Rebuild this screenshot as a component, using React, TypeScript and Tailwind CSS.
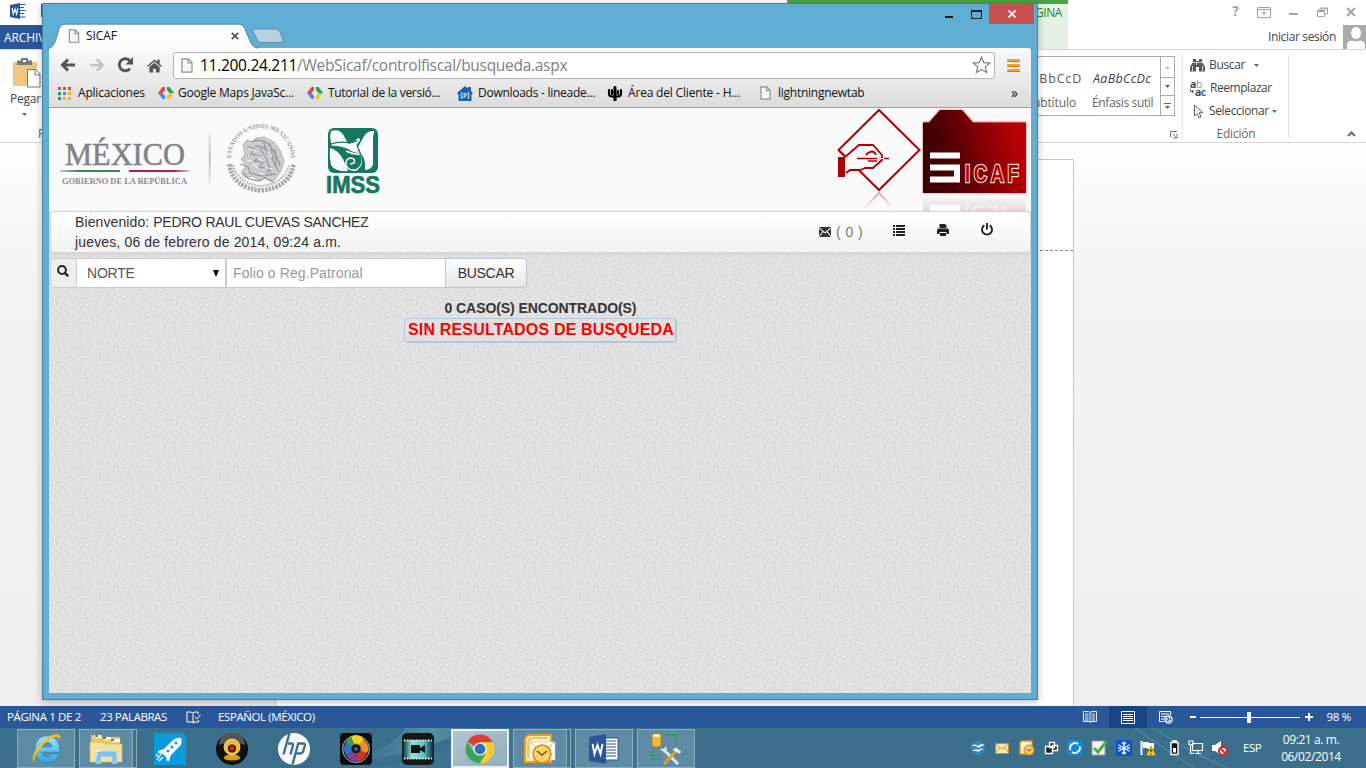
import React from "react";

const ui = "font-['Open_Sans','Noto_Sans',sans-serif]";

/* ---------- small shared drawings ---------- */

function Sheet({ w = 12, h = 15 }: { w?: number; h?: number }) {
  return (
    <svg width={w} height={h} viewBox="0 0 12 15" className="shrink-0">
      <path d="M1 .8h6.3L11 4.6v9.6H1z" fill="#f6f6f6" stroke="#8c8c8c" strokeWidth="1.2" />
      <path d="M7 1v4h4" fill="none" stroke="#8c8c8c" strokeWidth="1.1" />
    </svg>
  );
}

function Down({ color = "#666" }: { color?: string }) {
  return (
    <svg width="5" height="3" viewBox="0 0 5 3" className="shrink-0">
      <path d="M0 0h5L2.5 3z" fill={color} />
    </svg>
  );
}

function CodeMark() {
  return (
    <svg width="16" height="14" viewBox="0 0 16 14" className="shrink-0">
      <path d="M4.500 1H7v3L4.600 7H0z" fill="#dd4b39" />
      <path d="M0 7h4.600L7 10v3H4.500z" fill="#4a86f7" />
      <path d="M9 1h2.500L16 7h-4.600L9 4z" fill="#1aa260" />
      <path d="M11.400 7H16l-4.500 6H9v-3z" fill="#fbc02d" />
    </svg>
  );
}

/* ---------- Word ---------- */

function WordTop() {
  return (
    <div className="flex h-[50px] shrink-0 justify-between border-b border-[#d5d5d5] bg-white">
      <div className="flex w-[43px] flex-col">
        <div className="flex h-[25px] justify-between pt-[3px] pl-[10px]">
          <svg width="16" height="16" viewBox="0 0 16 16">
            <path d="M10 1.500h5.500M10 4.500h4M10 7.500h5.500M10 10.500h4M10 14h5.500" stroke="#2b579a" strokeWidth="1" />
            <path d="M0 2l10-2v16L0 14z" fill="#2b579a" />
            <path d="M2 5l1.300 6L5 6l1.600 5L8 5" fill="none" stroke="#fff" strokeWidth="1.2" />
          </svg>
          <div className="mt-px h-[13px] w-[2px] bg-[#80397b]" />
        </div>
        <div className="h-[25px] overflow-hidden bg-[#2a579a] pl-[4px] text-[12px] leading-[25px] tracking-[-0.1px] text-white">ARCHIVO</div>
      </div>
      <div className="flex">
        <div className="flex h-[49px] w-[281px] justify-end border-t-4 border-[#4ba446] bg-[#e6f1e6] pr-[6px]">
          <span className="pt-[1px] text-[12px] leading-[16px] tracking-[-0.4px] text-[#1b8a1b]">GINA</span>
        </div>
        <div className="flex w-[298px] flex-col">
          <div className="flex h-[24px] items-center justify-end gap-[18px] pr-[9px]">
            <span className="-mt-[2px] text-[14px] leading-[20px] font-bold text-[#a0a0a0]">?</span>
            <svg width="14" height="11" viewBox="0 0 14 11">
              <path d="M.5.5h13v10H.5zM.5 2.500h13M7 9V4.500M4.800 6.600L7 4.500l2.200 2.100" fill="none" stroke="#a5a5a5" />
            </svg>
            <svg width="10" height="11" viewBox="0 0 10 11"><path d="M0 6h9v2H0z" fill="#a5a5a5" /></svg>
            <svg width="11" height="11" viewBox="0 0 11 11">
              <path d="M.5 3.500h7v6h-7zM.5 4.500h7M3 3V1h7.500v6H8M3 2h7" fill="none" stroke="#a5a5a5" />
            </svg>
            <svg width="11" height="11" viewBox="0 0 11 11"><path d="M1 1l8 8M9 1l-8 8" stroke="#a5a5a5" strokeWidth="2" /></svg>
          </div>
          <div className="flex h-[25px] items-center justify-end gap-[6px]">
            <span className="text-[12px] tracking-[-0.35px] text-[#444]">Iniciar sesión</span>
            <svg width="24" height="25" viewBox="0 0 24 25">
              <path d="M1 1h23v24H1z" fill="#ababab" />
              <ellipse cx="14" cy="9" rx="5" ry="6" fill="#fff" />
              <path d="M5 25v-4q0-4 5-4.500q4 2 8 0q5 .5 5 4.500v4z" fill="#fff" />
            </svg>
          </div>
        </div>
      </div>
    </div>
  );
}

function WordRibbon() {
  return (
    <div className="flex h-[93px] shrink-0 justify-between border-b border-[#d5d5d5] bg-white text-[12px] text-[#444]">
      <div className="flex w-[46px] flex-col overflow-hidden pl-[10px]">
        <svg width="32" height="31" viewBox="0 0 32 31" className="mt-[8px] ml-[2px] shrink-0">
          <path d="M1 4h24v24H1z" fill="#eec67c" />
          <path d="M5 2.500h4V0h7v2.500h4V7H5z" fill="#777" />
          <path d="M11 2h3v2h-3z" fill="#fff" />
          <path d="M15.500 11.500h8l4.500 4.500v13H15.500z" fill="#fff" stroke="#777" />
          <path d="M23 12v5h5" fill="none" stroke="#777" />
        </svg>
        <span className="mt-px leading-[18px] tracking-[-0.25px]">Pegar</span>
        <span className="mt-[5px] ml-[12px] flex"><Down /></span>
        <span className="mt-[9px] ml-[28px] leading-[18px] text-[#666]">P</span>
      </div>
      <div className="flex">
        <div className="flex w-[146px] flex-col">
          <div className="mt-[6px] flex h-[60px] w-[139px] border border-[#ababab]">
            <div className="flex flex-1 justify-between pr-[6px]">
              <div className="flex w-[46px] flex-col items-end">
                <span className="mt-[13px] mr-[1px] h-[20px] text-[12.500px] leading-[18px] tracking-[0.8px] text-[#5a5a5a]">BbCcD</span>
                <span className="mt-[4px] mr-[7px] leading-[18px] tracking-[-0.1px] text-[#666]">ubtítulo</span>
              </div>
              <div className="flex w-[62px] flex-col whitespace-nowrap">
                <span className="mt-[13px] ml-[1px] h-[20px] w-[60px] overflow-hidden text-[12.500px] leading-[18px] tracking-[0.3px] text-[#404040] italic">AaBbCcDc</span>
                <span className="mt-[4px] leading-[18px] tracking-[-0.35px] text-[#666]">Énfasis sutil</span>
              </div>
            </div>
            <div className="flex w-[14px] flex-col border-l border-[#ababab]">
              <div className="flex h-[20px] items-center justify-center"><span className="flex rotate-180"><Down color="#bbb" /></span></div>
              <div className="flex h-[19px] items-center justify-center border-y border-[#ababab]"><Down /></div>
              <div className="flex flex-1 flex-col items-center justify-center gap-[2px]"><div className="h-px w-[7px] bg-[#666]" /><Down /></div>
            </div>
          </div>
          <svg width="8" height="8" viewBox="0 0 8 8" className="mt-[15px] ml-[134px]">
            <path d="M.5 6V.5H7M3 3l3.500 3.500M7 3v4H3" fill="none" stroke="#777" />
          </svg>
        </div>
        <div className="mt-[4px] mb-[4px] flex w-[107px] flex-col border-x border-[#e1e1e1] pl-[7px]">
          <div className="flex h-[22px] shrink-0 items-center gap-[4px]">
            <svg width="15" height="14" viewBox="0 0 15 14">
              <path d="M3 1h3v2h3V1h3v3l3 5v4.500H9V9H6v4.500H0V9l3-5z" fill="#5a5a5a" />
              <path d="M3 4.500h9M2.500 8v5M12.500 8v5M6.500 4v3" stroke="#fff" strokeWidth=".7" />
            </svg>
            <span className="tracking-[-0.35px]">Buscar</span>
            <span className="ml-[5px] flex"><Down /></span>
          </div>
          <div className="flex h-[24px] shrink-0 items-center gap-[3px]">
            <div className="flex h-[17px] w-[16px] flex-col text-[10.500px] font-bold text-[#444]">
              <span className="h-[8px] leading-[8px] tracking-[-0.3px]">a<span className="font-normal text-[#999]">b</span></span>
              <span className="flex h-[8px] items-center leading-[8px] tracking-[-0.5px]">
                <svg width="4" height="5" viewBox="0 0 4 5" className="mr-px"><path d="M.5 0v2.500h3M2 1l1.500 1.500L2 4" fill="none" stroke="#2b6cb5" /></svg>
                a<span className="text-[#2b6cb5]">c</span>
              </span>
            </div>
            <span className="ml-px tracking-[-0.45px]">Reemplazar</span>
          </div>
          <div className="flex h-[22px] shrink-0 items-center gap-[4px]">
            <svg width="15" height="15" viewBox="0 0 15 15">
              <path d="M4.500 1v11l2.700-2.500 2 4.500 2-1-2-4.300H13z" fill="#fff" stroke="#666" />
            </svg>
            <span className="tracking-[-0.35px]">Seleccionar</span>
            <span className="-ml-[1px] flex"><Down /></span>
          </div>
          <div className="mt-[3px] flex w-[92px] justify-center leading-[17px] tracking-[-0.2px] text-[#666]">Edición</div>
        </div>
        <div className="flex w-[77px] items-end justify-end pr-[10px] pb-[5px]">
          <svg width="9" height="6" viewBox="0 0 9 6"><path d="M1 5l3.500-3.500L8 5" fill="none" stroke="#666" strokeWidth="2" /></svg>
        </div>
      </div>
    </div>
  );
}

function WordDocument() {
  return (
    <div className="flex min-h-0 flex-1 bg-linear-to-b from-[#fefefe] via-[#f3f3f3] via-25% to-[#eeeeee] pt-[16px] pl-[275px]">
      <div className="w-[799px] border-x border-t border-[#c6c6c6] bg-white">
        <div className="mt-[90px] border-t border-dashed border-[#888]" />
      </div>
    </div>
  );
}

function WordStatus() {
  return (
    <div className="flex h-[22px] shrink-0 items-center bg-[#2a579a] text-[11.500px] text-white">
      <span className="ml-[7px] w-[93px] tracking-[-0.35px]">PÁGINA 1 DE 2</span>
      <span className="w-[86px] tracking-[-0.45px]">23 PALABRAS</span>
      <svg width="15" height="13" viewBox="0 0 15 13">
        <path d="M7 2.500v8.500l1.500 1M7 2Q5 .5 1 1v10h4.500L7 12M7 2q2-1.500 5-1v2M9 6l2 2 3.500-4.500M12.500 9v2H8" fill="none" stroke="#fff" />
      </svg>
      <span className="ml-[17px] tracking-[-0.4px]">ESPAÑOL (MÉXICO)</span>
      <div className="ml-auto flex h-full items-center">
        <svg width="14" height="12" viewBox="0 0 14 12">
          <path d="M7 1.500L5.500.5h-5v10h5l1.500 1 1.500-1h5V.5h-5L7 1.500zM7 1.500v10M2 3h3.500M2 5h3.500M2 7h3.500M8.500 3H12M8.500 5H12M8.500 7H12M2 9h3.500M8.500 9H12" fill="none" stroke="#fff" strokeWidth=".9" />
        </svg>
        <div className="ml-[12px] flex h-full w-[38px] items-center justify-center bg-[#1a4484]">
          <svg width="14" height="13" viewBox="0 0 14 13">
            <path d="M.5.5h13v12H.5zM2 3.500h10M2 5.500h10M2 7.500h10M2 9.500h10" fill="none" stroke="#fff" />
          </svg>
        </div>
        <svg width="14" height="13" viewBox="0 0 14 13" className="ml-[12px]">
          <path d="M5 10.500H.5V.5h11V4M2 3h8M2 5.500h5M2 8h3" fill="none" stroke="#fff" />
          <circle cx="9.500" cy="8.500" r="4" fill="#a8c4e4" stroke="#fff" strokeWidth=".7" />
          <path d="M8 6l2 2-2 2M11 7l1.500 2" fill="none" stroke="#2a579a" />
        </svg>
        <div className="ml-[17px] h-[2px] w-[6px] bg-white" />
        <div className="ml-[4px] flex h-[11px] w-[100px] items-center">
          <div className="h-px w-[47px] bg-white" />
          <div className="h-[11px] w-[4px] bg-white" />
          <div className="h-px flex-1 bg-white" />
        </div>
        <svg width="8" height="8" viewBox="0 0 8 8" className="ml-[5px]"><path d="M0 4h8M4 0v8" stroke="#fff" strokeWidth="2" /></svg>
        <span className="mr-[15px] ml-[14px] tracking-[-0.3px]">98 %</span>
      </div>
    </div>
  );
}

/* ---------- Browser chrome ---------- */

function TitleBar() {
  return (
    <div className="relative -mx-[6px] flex h-[44px] shrink-0 justify-between">
      <svg width="244" height="26" viewBox="0 0 244 26" className="absolute top-[19px] left-0">
        <defs>
          <linearGradient id="tab" x1="0" y1="0" x2="0" y2="1">
            <stop offset="0" stopColor="#fff" /><stop offset="1" stopColor="#fafafa" />
          </linearGradient>
        </defs>
        <path d="M5 25.500C10 24 11 22 13 16L16 6Q17.500 1.500 22 1.500H196Q200 1.500 201.500 5L207 18Q210 25 215 25.500z" fill="url(#tab)" />
        <path d="M5 25.500C10 24 11 22 13 16L16 6Q17.500 1 22 1H196Q200 1 201.500 5L207 18Q210 25 215 25" fill="none" stroke="#4e87a5" />
        <path d="M211 6h22q3 0 4 3l3 8q1 2.500-2 2.500h-20q-3 0-4-3l-4-8q-1-2.500 1-2.500z" fill="#b5d0df" stroke="#588fac" />
      </svg>
      <div className="relative flex h-[22px] w-[202px] items-center self-end pr-[6px] pb-[2px] pl-[25px]">
        <Sheet w={12} h={14} />
        <span className="ml-[6px] text-[12px] tracking-[-0.1px] text-[#111]">SICAF</span>
        <svg width="8" height="8" viewBox="0 0 8 8" className="ml-auto"><path d="M.8.8l6.400 6.400M7.200.8L.8 7.200" stroke="#555" strokeWidth="1.800" /></svg>
      </div>
      <div className="flex">
        <svg width="8" height="14" viewBox="0 0 8 14" className="mt-[3px]"><path d="M0 9h8v2H0z" fill="#1b1b1b" /></svg>
        <svg width="11" height="9" viewBox="0 0 11 9" className="mt-[6px] ml-[18px]"><path d="M.5 1.500h10v7H.5z" fill="none" stroke="#1b1b1b" /><path d="M0 0h11v2H0z" fill="#1b1b1b" /></svg>
        <div className="mr-[3px] ml-[7px] flex h-[20px] w-[45px] items-center justify-center bg-[#c75050]">
          <svg width="8" height="8" viewBox="0 0 8 8"><path d="M.5.5l7 7M7.500.5l-7 7" stroke="#fff" strokeWidth="1.600" /></svg>
        </div>
      </div>
    </div>
  );
}

function Toolbar() {
  return (
    <div className="flex h-[34px] shrink-0 items-center pl-[11px]">
      <svg width="16" height="14" viewBox="0 0 16 14"><path d="M15 7H3M8 1.500L2.500 7 8 12.500" fill="none" stroke="#555" strokeWidth="3" /></svg>
      <svg width="16" height="14" viewBox="0 0 16 14" className="ml-[13px]"><path d="M1 7h12M8 1.500L13.500 7 8 12.500" fill="none" stroke="#c3c3c3" strokeWidth="2.500" /></svg>
      <svg width="17" height="16" viewBox="0 0 17 16" className="ml-[12px]">
        <path d="M13 11.500A6 6 0 1 1 13 4" fill="none" stroke="#555" strokeWidth="2.800" />
        <path d="M16 0v7.500H8.500z" fill="#555" />
      </svg>
      <svg width="15" height="15" viewBox="0 0 16 15" className="ml-[13px]">
        <path d="M0 8l8-7 3 2.600V1h2.500v4.800L16 8l-1 1.200-7-6-7 6z" fill="#555" />
        <path d="M2.500 9L8 4.500 13.500 9v6h-4v-4h-3v4h-4z" fill="#555" />
      </svg>
      <div className="ml-[11px] flex h-[27px] w-[822px] items-center rounded-[3px] border border-[#b4b4b4] bg-white pr-[3px] pl-[7px]">
        <Sheet w={12} h={15} />
        <span className="ml-[7px] text-[15.500px] leading-[24px] tracking-[-0.29px] whitespace-nowrap text-[#808080]">
          <span className="text-black">11.200.24.211</span>/WebSicaf/controlfiscal/busqueda.aspx
        </span>
        <svg width="19" height="18" viewBox="0 0 19 18" className="ml-auto">
          <path d="M9.500 1.200l2.300 5.400 6 .5-4.600 3.800 1.500 5.700-5.200-3-5.200 3 1.500-5.700L1.200 7.100l6-.5z" fill="#fff" stroke="#808080" strokeWidth="1.200" />
        </svg>
      </div>
      <div className="ml-[12px] flex flex-col gap-[2px]">
        <div className="h-[3px] w-[13px] rounded-[1px] border-b border-[#d9760f] bg-[#f9a12a]" />
        <div className="h-[3px] w-[13px] rounded-[1px] border-b border-[#d9760f] bg-[#f9a12a]" />
        <div className="h-[3px] w-[13px] rounded-[1px] border-b border-[#d9760f] bg-[#f9a12a]" />
      </div>
    </div>
  );
}

function Bookmarks() {
  const dots = ["#dd4b39", "#dd4b39", "#dd4b39", "#1aa260", "#4285f4", "#f4b400", "#1aa260", "#f4b400", "#f4b400"];
  return (
    <div className="flex h-[22px] shrink-0 items-center pl-[9px] text-[12px] whitespace-nowrap text-[#111]">
      <div className="flex w-[100px] items-center gap-[7px]">
        <svg width="13" height="13" viewBox="0 0 13 13">
          {dots.map((c, i) => <rect key={i} x={(i % 3) * 5} y={Math.floor(i / 3) * 5} width="3" height="3" fill={c} />)}
        </svg>
        <span className="tracking-[-0.2px]">Aplicaciones</span>
      </div>
      <div className="flex w-[149px] items-center gap-[4px]"><CodeMark /><span className="tracking-[-0.22px]">Google Maps JavaSc...</span></div>
      <div className="flex w-[150px] items-center gap-[5px]"><CodeMark /><span className="tracking-[-0.3px]">Tutorial de la versió...</span></div>
      <div className="flex w-[150px] items-center gap-[5px]">
        <svg width="16" height="15" viewBox="0 0 16 15">
          <path d="M0 7l8-7 3 2.500V1h3v4l2 2-1.500 1.500V15h-13V8.500z" fill="#1763b8" />
          <path d="M5 6Q3 9.500 5 13M11 6q2 3.500 0 7M7 12V7.500h1.200a1.300 1.300 0 0 1 0 2.700H7" fill="none" stroke="#fff" />
        </svg>
        <span className="tracking-[-0.27px]">Downloads - lineade...</span>
      </div>
      <div className="flex w-[153px] items-center gap-[5px]">
        <svg width="16" height="15" viewBox="0 0 16 15">
          <path d="M8 14V3M8 10.500H5Q2 10.500 2 7.500V4M8 10.500h3q3 0 3-3V4M5 8V4M11 8V5" fill="none" stroke="#000" strokeWidth="2.200" strokeLinecap="round" />
          <path d="M6.500 1q1.500-2 3 0v14h-3z" fill="#000" />
        </svg>
        <span className="tracking-[-0.18px]">Área del Cliente - H...</span>
      </div>
      <div className="flex items-center gap-[7px]"><Sheet w={11} h={14} /><span className="tracking-[-0.25px]">lightningnewtab</span></div>
      <span className="mr-[13px] ml-auto text-[14px] leading-[20px]">»</span>
    </div>
  );
}

/* ---------- Page content ---------- */

function MexicoLogo() {
  return (
    <svg width="250" height="90" viewBox="0 0 250 90" className="shrink-0">
      <defs>
        <linearGradient id="fade" x1="0" y1="0" x2="0" y2="1">
          <stop offset="0" stopColor="#bbb" stopOpacity="0" /><stop offset=".5" stopColor="#999" /><stop offset="1" stopColor="#bbb" stopOpacity="0" />
        </linearGradient>
        <linearGradient id="halo">
          <stop offset="0" stopColor="#aaa" stopOpacity="0" /><stop offset=".5" stopColor="#aaa" stopOpacity=".1" /><stop offset="1" stopColor="#aaa" stopOpacity=".7" />
        </linearGradient>
        <linearGradient id="grn"><stop offset="0" stopColor="#bcd" /><stop offset=".3" stopColor="#2f8a57" /><stop offset="1" stopColor="#2f8a57" /></linearGradient>
        <linearGradient id="red"><stop offset="0" stopColor="#b0204e" /><stop offset=".75" stopColor="#b0204e" /><stop offset="1" stopColor="#dbb" /></linearGradient>
        <path id="arc" d="M172.500 49A29.800 29.800 0 1 1 231.500 49" />
      </defs>
      <text x="6" y="51.500" fontFamily="Liberation Serif" fontSize="32" fill="#808285" stroke="#808285" strokeWidth=".5" textLength="120" lengthAdjust="spacingAndGlyphs">MÉXICO</text>
      <rect x="1" y="57" width="60" height="2" fill="url(#grn)" />
      <rect x="70" y="57" width="60" height="2" fill="url(#red)" />
      <text x="3" y="70.500" fontFamily="Liberation Serif" fontSize="8.500" fontWeight="700" fill="#8a8c8e" textLength="125" lengthAdjust="spacingAndGlyphs">GOBIERNO DE LA REPÚBLICA</text>
      <path d="M151 18Q144 45 151 72z" fill="url(#halo)" opacity=".7" />
      <rect x="150.500" y="16" width="1" height="58" fill="url(#fade)" />
      <g fill="none" stroke="#a4a5a7">
        <path d="M170.500 51Q173 74.500 202 77.500Q231 74.500 234.500 51" strokeWidth="4.500" strokeDasharray="2.400 1.100" />
        <path d="M174 52Q179 71 202 73Q225 71 230 52" strokeWidth="2" strokeDasharray="1.800 1" stroke="#b4b5b7" />
        <path d="M184 32l4-5 5 2 4-4 8-1 10 5 6 8 4 11-3 10-8 11-8-4-6 2-7-4-7 2-4-6 5-6-5-7 4-4z" fill="#cbcccd" stroke="#b4b5b7" strokeWidth="1" />
        <path d="M192 29q12-5 19 4t10 20M196 33q12 0 16 10t8 16M188 33l7 3-3 5 9 2-6 5 10 1-6 6 12-1-4 7M181 51l8 3 2 6 12 3 14-2M204 28l5 14M211 30l3 16M216 36l1 18M201 35l7 12 4 14M184 60l6 6 10 2 6-3 8 4" strokeWidth="1.300" stroke="#999a9d" />
        <path d="M190 36l7 2M198 43l6 6M194 51l6 5M208 38l5 6M206 54l7 2M188 47l5 1M200 60l6 2" stroke="#f6f6f6" strokeWidth="1.200" />
      </g>
      <text fontFamily="Liberation Serif" fontSize="6.200" fontWeight="700" fill="#96979a" textAnchor="middle">
        <textPath href="#arc" startOffset="50%">ESTADOS UNIDOS MEXICANOS</textPath>
      </text>
    </svg>
  );
}

function ImssLogo() {
  return (
    <svg width="54" height="68" viewBox="0 0 54 68" className="shrink-0">
      <rect x="2" y="1" width="50" height="45" rx="6" fill="#17775f" />
      <path d="M5 4Q14 1 18 9l4 8q-9 2-16 1-3-7-1-14z" fill="#fafafa" />
      <path d="M48 4q-7-1-11 7l-5 9 4 8q4 5 3 15 8-1 8-7V10q1-4 1-6z" fill="#fafafa" />
      <path d="M4 21q8 2 13 11l5 12q-13 1-17-6-2-9-1-17z" fill="#fafafa" />
      <path d="M5 17q8-3 19-1l9-6 2 3-4 5q2 5 3 9-8-1-13-5-8-3-16-3z" fill="#fafafa" stroke="#17775f" strokeWidth="1.200" />
      <path d="M20 24q9 4 14 3 6 10-4 16-9 1-10-6 0-6 5-6 5 1 3 5l-4 1" fill="#17775f" stroke="#fafafa" strokeWidth="1.500" />
      <path d="M34 27q6 9-1 16M22 16l9-2" fill="none" stroke="#17775f" strokeWidth="1.400" />
      <text x="0" y="66" fontFamily="Liberation Sans" fontSize="24.500" fontWeight="700" fill="#17775f" stroke="#17775f" strokeWidth=".7" textLength="54" lengthAdjust="spacingAndGlyphs">IMSS</text>
    </svg>
  );
}

function SicafMark() {
  return (
    <svg width="196" height="103" viewBox="0 0 196 103" className="shrink-0">
      <defs>
        <linearGradient id="folder" x1="0" y1=".2" x2="1" y2="0">
          <stop offset="0" stopColor="#3d0003" /><stop offset=".25" stopColor="#580005" /><stop offset=".8" stopColor="#b10005" /><stop offset="1" stopColor="#c30005" />
        </linearGradient>
        <linearGradient id="mirror" x1="0" y1="0" x2="0" y2="1">
          <stop offset="0" stopColor="#b10000" stopOpacity=".35" /><stop offset="1" stopColor="#b10000" stopOpacity="0" />
        </linearGradient>
        <linearGradient id="mirror2" x1="0" y1="0" x2="0" y2="1">
          <stop offset="0" stopColor="#700" stopOpacity=".03" /><stop offset="1" stopColor="#700" stopOpacity=".13" />
        </linearGradient>
        <filter id="soft"><feGaussianBlur stdDeviation="1" /></filter>
      </defs>
      <path d="M44 2L84.500 42 44 82 3.500 42z" fill="none" stroke="#ad0003" strokeWidth="2" />
      <path d="M4 49l6-1L24 36.500h14l9 10-2 8-8 8-12-1-14 2-8 1z" fill="#fafafa" />
      <path d="M10 49l14-12h14l9 10v5l-9 8h-8q-3 2-7 2H15l-4 3M3.500 42l7 7M31 47q7-7 10 0" fill="none" stroke="#ad0003" strokeWidth="1.800" />
      <path d="M22 50.500h32M33 53h9" fill="none" stroke="#ad0003" strokeWidth="1.400" />
      <path d="M42 50.500h7" stroke="#fafafa" />
      <rect x="3" y="49" width="7" height="20" fill="#ad0003" />
      <path d="M29 101L44 85l15 16" fill="none" stroke="url(#mirror)" strokeWidth="2" />
      <path d="M88 14h6l11-12h22l11 12h53v71H88z" fill="#d41a1a" opacity=".7" filter="url(#soft)" />
      <path d="M88 14.500h6L105 2h22l11 12.500h53V85H88z" fill="url(#folder)" />
      <path d="M95 44.500h30v6H95zM95 56.500h30v18H95v-6h24v-6H95z" fill="#fff" />
      <g transform="translate(130 73.500) scale(.78 1)">
        <text x="0" y="0" fontFamily="Liberation Sans" fontSize="23.500" fontWeight="700" fill="#b10005" stroke="#f3dcdc" strokeWidth="2.400" style={{ paintOrder: "stroke" }} textLength="69">ICAF</text>
      </g>
      <path d="M88 90h103v13H88z" fill="url(#mirror2)" />
      <path d="M95 97h30v6H95z" fill="#fff" opacity=".9" />
      <path d="M132 98v5M148 99h-6q-4 0-4 4M153 99h8q3 2 0 4M170 98v5" fill="none" stroke="#fff" strokeWidth="1.500" opacity=".7" />
    </svg>
  );
}

function UserBar() {
  return (
    <div className="flex h-[42px] shrink-0 justify-between rounded-[4px] border border-[#d4d4d4] bg-linear-to-b from-white to-[#f2f2f2] pl-[24px] text-[#333] shadow-[0_1px_4px_rgba(0,0,0,0.07)]">
      <div className="flex flex-col text-[14px] leading-[20px]">
        <span className="tracking-[-0.16px]"><span className="tracking-[0.1px]">Bienvenido: </span><span className="tracking-[-0.26px]">PEDRO RAUL CUEVAS SANCHEZ</span></span>
        <span className="tracking-[0.15px]">jueves, 06 de febrero de 2014, 09:24 a.m.</span>
      </div>
      <div className="flex h-[40px] items-center pr-[37px]">
        <svg width="12" height="10" viewBox="0 0 12 10" className="-mt-px ml-px">
          <path d="M0 0h12v10H0z" fill="#333" />
          <path d="M0 .8l6 5 6-5M0 9.500l4.200-5M12 9.500l-4.200-5" fill="none" stroke="#fff" strokeWidth="1.100" />
        </svg>
        <span className="ml-[5px] text-[14px] tracking-[0.4px] text-[#777]">( 0 )</span>
        <svg width="12" height="11" viewBox="0 0 12 11" className="-mt-[3px] ml-[30px]">
          <path d="M0 1h2M0 4h2M0 7h2M0 10h2M3 1h9M3 4h9M3 7h9M3 10h9" stroke="#222" strokeWidth="2" />
        </svg>
        <svg width="12" height="12" viewBox="0 0 12 12" className="-mt-[4px] ml-[32px]">
          <path d="M3 0h5l1.500 1.500V4H2.500V0zM1 4.500h10l1 1.500v4h-2.500V8h-7v2H0V6zM3 9h6v3H3z" fill="#222" />
        </svg>
        <svg width="12" height="13" viewBox="0 0 12 13" className="-mt-[5px] ml-[32px]">
          <path d="M3.300 2.400a5 5 0 1 0 5.400 0M6 0v6.500" fill="none" stroke="#222" strokeWidth="1.900" />
        </svg>
      </div>
    </div>
  );
}

function SearchRow() {
  return (
    <div className="mt-[5px] flex h-[30px] shrink-0 text-[14px]">
      <div className="flex w-[27px] items-center justify-center rounded-l-[4px] border border-[#ccc] bg-[#eee]">
        <svg width="12" height="12" viewBox="0 0 12 12" className="-mt-[4px] -ml-px">
          <circle cx="5" cy="5" r="3.900" fill="none" stroke="#222" strokeWidth="2" /><path d="M7.800 7.800l3.400 3.400" stroke="#222" strokeWidth="2.400" />
        </svg>
      </div>
      <div className="flex w-[149px] items-center justify-between border-y border-r border-[#ccc] bg-white pr-[6px] pl-[10px] tracking-[-0.2px] text-[#555]">
        NORTE
        <svg width="6" height="7" viewBox="0 0 6 7"><path d="M0 0h6L3 7z" fill="#000" /></svg>
      </div>
      <div className="flex w-[219px] items-center border border-r-0 border-[#ccc] bg-white pl-[6px] tracking-[0.1px] text-[#999]">Folio o Reg.Patronal</div>
      <div className="flex w-[82px] items-center justify-center rounded-r-[4px] border border-[#b9c7da] bg-linear-to-b from-white to-[#e6e6e6] tracking-[-0.3px] text-[#333]">BUSCAR</div>
    </div>
  );
}

function Page() {
  return (
    <div className="relative flex min-h-0 flex-1 flex-col bg-[#e0e0e0] font-['Liberation_Sans',sans-serif]">
      <svg width="982" height="585" className="absolute inset-0">
        <defs>
          <filter id="weave" x="0" y="0" width="100%" height="100%" colorInterpolationFilters="sRGB">
            <feTurbulence type="fractalNoise" baseFrequency=".42 .5" numOctaves="2" seed="4" />
            <feColorMatrix values=".12 0 0 0 .822  .12 0 0 0 .822  .12 0 0 0 .822  0 0 0 0 1" />
          </filter>
          <pattern id="cloth" width="60" height="60" patternUnits="userSpaceOnUse">
            <rect width="60" height="60" filter="url(#weave)" />
          </pattern>
        </defs>
        <rect width="982" height="585" fill="url(#cloth)" />
      </svg>
      <div className="relative flex min-h-0 flex-1 flex-col pl-px">
        <div className="-ml-px flex h-[103px] shrink-0 bg-[#fafafa] pl-[10px]">
          <div className="pt-[5px]"><MexicoLogo /></div>
          <div className="pt-[19px] pl-[17px]"><ImssLogo /></div>
          <div className="ml-auto"><SicafMark /></div>
        </div>
        <UserBar />
        <SearchRow />
        <div className="mt-[10px] flex flex-col items-center">
          <span className="text-[14px] leading-[20px] font-bold tracking-[-0.08px] text-[#333]">0 CASO(S) ENCONTRADO(S)</span>
          <div className="flex h-[25px] w-[273px] items-center justify-center rounded-[4px] border border-r-2 border-b-2 border-[#b9c6d8] pb-[1px] pl-[2px] text-[16px] font-bold tracking-[0.17px] whitespace-nowrap text-[#f00]">SIN RESULTADOS DE BUSQUEDA</div>
        </div>
      </div>
    </div>
  );
}

function BrowserWindow() {
  return (
    <div className="absolute top-[3px] left-[42px] flex h-[697px] w-[996px] flex-col border border-[#44809f] bg-[#61aed5] px-[6px] pb-[6px] shadow-[0_2px_8px_rgba(0,0,0,0.25)]">
      <TitleBar />
      <div className="flex min-h-0 flex-1 flex-col overflow-hidden">
        <div className="flex h-[60px] shrink-0 flex-col rounded-t-[3px] border-b border-[#a0a0a0] bg-linear-to-b from-[#fafafa] to-[#dcdcdc]">
          <Toolbar />
          <Bookmarks />
        </div>
        <Page />
      </div>
    </div>
  );
}

/* ---------- Taskbar ---------- */

function TaskItem({ children, frame }: { children: React.ReactNode; frame?: "on" | "open" | "stack" }) {
  const cls =
    frame === "on"
      ? "border-2 border-[#e7eff3] bg-linear-to-br from-[#b3c5d0] to-[#91acbc]"
      : frame
        ? "border border-[#8fadbf] bg-[#5f8ba4]"
        : "";
  return (
    <div className="mr-[4px] flex h-[39px] w-[58px] shrink-0">
      <div className={"flex flex-1 items-center justify-center " + cls}>{children}</div>
      {frame === "stack" && <div className="w-[4px] border-y border-r border-[#8fadbf] bg-[#426f8a]" />}
    </div>
  );
}

function Taskbar() {
  return (
    <div className="relative flex h-[40px] shrink-0 overflow-hidden bg-linear-to-b from-[#3a6f8b] to-[#3c6e8b] pl-[17px]">
      <svg width="1366" height="40" viewBox="0 0 1366 40" className="absolute inset-0">
        <defs><linearGradient id="swoosh"><stop offset="0" stopColor="#3d7a97" stopOpacity="0" /><stop offset=".7" stopColor="#5e9fb0" stopOpacity=".7" /><stop offset="1" stopColor="#4c8499" stopOpacity=".5" /></linearGradient></defs>
        <path d="M370 40Q430 32 482 0H690V40z" fill="#3f7897" opacity=".5" />
        <path d="M330 40Q410 28 475 0h-70q-10 20-75 40z" fill="url(#swoosh)" />
        <path d="M1135 0q35 25 60 40M1153 0q40 26 75 40" fill="none" stroke="#6fa0b5" opacity=".7" />
      </svg>
      <div className="relative flex flex-1 pt-px">
        <TaskItem frame="open">
          <svg width="32" height="32" viewBox="0 0 32 32">
            <defs><linearGradient id="ie" x1="0" y1="0" x2="0" y2="1"><stop offset="0" stopColor="#9fe4fb" /><stop offset="1" stopColor="#2fa4e0" /></linearGradient></defs>
            <path d="M17 3C9 3 5 9 5 16.500S10 30 17 30c6 0 10-3 12-9h-7.500c-1 2-2.500 3-4.500 3-3 0-5-2-5-5h17.500C30.500 9 25 3 17 3zm-5 11c.5-3 2.500-4.500 5-4.500s4.500 1.500 5 4.500z" fill="url(#ie)" stroke="#1f8ac8" strokeWidth=".6" />
            <path d="M5 30C0 27 4 17 12 9 19 2 28-1 30 3c.6 1.500 0 3-.6 4.500 0-3-1-4-4-3.500C19 5 11 13 7.500 19c-3 5-4 8-2.500 11z" fill="#f6c52d" stroke="#d99a10" strokeWidth=".4" />
          </svg>
        </TaskItem>
        <TaskItem frame="stack">
          <svg width="34" height="32" viewBox="0 0 34 32">
            <path d="M2 6V2h10l1 2h18v24H2z" fill="#e9c86d" stroke="#c9a348" strokeWidth=".6" />
            <path d="M5 2h7v3H5zM15 4h7v3h-7zM23 6h8v3h-8z" fill="#fff" />
            <path d="M6 2h3v2H6z" fill="#2aa335" /><path d="M14 4h3v2h-3z" fill="#d44" /><path d="M22 6h3v2h-3z" fill="#2b86d3" />
            <path d="M1 9h13l1 2h18v18H1z" fill="#f6e19b" stroke="#d0b05c" strokeWidth=".6" />
            <path d="M7 30V19q0-1 1-1h19q1 0 1 1v11h-5v-6H12v6z" fill="#85bfe3" stroke="#bfe3f5" />
            <path d="M8 14v9M4 18h8" stroke="#fff" opacity=".7" />
          </svg>
        </TaskItem>
        <TaskItem>
          <svg width="32" height="32" viewBox="0 0 32 32">
            <path d="M0 0h29l3 3v29H0z" fill="#0a9bdc" />
            <path d="M27 5q-5-1-9 3l-8 8-6 2v2l5 1 3 3 1 4h2l2-6 8-8q4-4 2-9z" fill="#fff" />
            <path d="M7 21l-4 6M9 24l-4 4M3 21v3" stroke="#fff" strokeWidth="1.300" />
            <g fill="#0a9bdc"><circle cx="22" cy="10" r="1.500" /><circle cx="18" cy="14" r="1.500" /><circle cx="14" cy="18" r="1.500" /></g>
          </svg>
        </TaskItem>
        <TaskItem>
          <svg width="32" height="32" viewBox="0 0 32 32">
            <circle cx="16" cy="16" r="15.500" fill="#111" stroke="#000" /><path d="M3 12a13 13 0 0 1 26 0q-13-6-26 0z" fill="#555" />
            <path d="M8 26q0-4 4-4h8q4 0 4 4-8 3-16 0z" fill="#d99b18" />
            <circle cx="16" cy="14" r="8" fill="#f3bc35" stroke="#fff3b0" strokeWidth=".7" />
            <circle cx="16" cy="15.500" r="4" fill="#3a1c08" /><circle cx="16" cy="15.500" r="2.200" fill="#e52222" />
          </svg>
        </TaskItem>
        <TaskItem>
          <svg width="32" height="32" viewBox="0 0 32 32">
            <circle cx="16" cy="16" r="16" fill="#fafafa" />
            <path d="M11.500 0L5.500 21.500M10 10.500h3.500q2 0 1.500 2L12.500 21.500M20.500 9.500L14.500 31.500M20.500 10.500H25q2.500 0 1.800 2.500l-1.500 5q-.8 2.500-3.500 2.500h-3" fill="none" stroke="#3d718d" strokeWidth="2.400" />
          </svg>
        </TaskItem>
        <TaskItem>
          <svg width="32" height="32" viewBox="0 0 32 32">
            <rect width="32" height="32" rx="4" fill="#0c0c0e" /><circle cx="16" cy="16" r="13.500" fill="#222" stroke="#bbb" />
            <path d="M16 16L11 4q8-4 13 3z" fill="#f4d21c" /><path d="M16 16l8-9q7 6 3 13z" fill="#f3901a" /><path d="M16 16l11 4q-3 8-10 8z" fill="#d83226" /><path d="M16 16l1 12q-8 0-11-6z" fill="#833fa5" /><path d="M16 16L6 22q-4-7 0-12z" fill="#2c70d1" /><path d="M16 16L6 10q1-4 5-6z" fill="#37a53d" />
            <circle cx="16" cy="16" r="5" fill="#17181c" stroke="#666" /><circle cx="16" cy="16" r="2" fill="#425f89" />
          </svg>
        </TaskItem>
        <TaskItem>
          <svg width="32" height="32" viewBox="0 0 32 32">
            <defs><linearGradient id="film"><stop offset="0" stopColor="#0e2f36" /><stop offset=".3" stopColor="#8ae6df" /><stop offset=".7" stopColor="#58c0c4" /><stop offset="1" stopColor="#0e2f36" /></linearGradient></defs>
            <rect width="32" height="32" rx="5" fill="#171717" /><path d="M1 7h30v19H1z" fill="url(#film)" />
            <path d="M2 7.500h28M2 25.500h28" stroke="#e6e6e6" strokeWidth="2" strokeDasharray="1.500 1.500" />
            <path d="M9 12h9v8H9zM18 15l5-3v8l-5-3z" fill="#111" />
          </svg>
        </TaskItem>
        <TaskItem frame="on">
          <svg width="30" height="30" viewBox="0 0 30 30">
            <path d="M15 15L2.500 8A14.200 14.200 0 0 1 27.500 8z" fill="#dc3f33" /><path d="M15 8h12.500A14.200 14.200 0 0 1 15 29.200l6-10z" fill="#fbca2d" /><path d="M2.500 8A14.200 14.200 0 0 0 15 29.200l5.500-9.500L9 18z" fill="#3ba457" />
            <circle cx="15" cy="15" r="6.600" fill="#f1f1f1" /><circle cx="15" cy="15" r="5.300" fill="#2e70c0" />
          </svg>
        </TaskItem>
        <TaskItem frame="stack">
          <svg width="32" height="30" viewBox="0 0 32 30">
            <path d="M1 28V7q0-6 6-6h20v27z" fill="#fff0bc" stroke="#ef9d17" strokeWidth="2" /><path d="M4 24V9q0-5 5-5h15" fill="none" stroke="#f7bd58" strokeWidth="2" />
            <path d="M6 8h25v18H6z" fill="#fff" stroke="#d6c9a0" strokeWidth=".7" /><path d="M6 8l12 10L31 8" fill="none" stroke="#bba" />
            <circle cx="18" cy="20" r="9" fill="#f8d164" stroke="#d38b15" strokeWidth="1.500" /><path d="M13 17l5 4 5-4" fill="none" stroke="#80561a" strokeWidth="1.600" />
          </svg>
        </TaskItem>
        <TaskItem frame="open">
          <svg width="32" height="30" viewBox="0 0 32 30">
            <path d="M17 4h13v22H17z" fill="#fff" stroke="#2b579a" /><path d="M18 7h10M18 10h10M18 13h10M18 16h10M18 19h10M18 22h10" stroke="#2b579a" strokeWidth="1.200" />
            <path d="M1 3l17-3v30L1 27z" fill="#2b579a" /><path d="M4.500 10l2 10 3-9 3 9 2-10" fill="none" stroke="#fff" strokeWidth="1.900" />
          </svg>
        </TaskItem>
        <TaskItem frame="open">
          <svg width="32" height="32" viewBox="0 0 32 32">
            <path d="M2 2q4-2 9 0v11q-4 2-9 0z" fill="#f1bc35" stroke="#9b731b" strokeWidth=".6" /><ellipse cx="6.500" cy="2.500" rx="4" ry="1.500" fill="#fff2b2" />
            <path d="M15 2h11v11M2 18v8h10" fill="none" stroke="#1ea132" strokeWidth="1.800" strokeDasharray="2 1.500" />
            <path d="M14 17l14 14" stroke="#dfe7ee" strokeWidth="3" /><path d="M27 17L14 31" stroke="#e1a325" strokeWidth="3" /><path d="M22 17l4-3 6 5-3 2z" fill="#e7edf1" stroke="#777" strokeWidth=".6" /><path d="M11 16l4 2 1-4" fill="none" stroke="#e8edf1" strokeWidth="2" />
          </svg>
        </TaskItem>
      </div>
      <div className="relative flex h-full items-center text-[12px] text-white">
        <div className="flex items-center gap-[8.300px]">
          <svg width="16" height="16" viewBox="0 0 16 16"><circle cx="8" cy="8" r="7" fill="#3b86c0" /><path d="M1 6q4-3 7 0 3-3 7-1-4 1-6 3Q6 5 1 6zM2 11q4-3 6-1 3-2 6-1-4 1-6 3-2-2-6-1z" fill="#fff" /></svg>
          <svg width="16" height="16" viewBox="0 0 16 16"><path d="M1.500 3.500h13v10h-13z" fill="#f7e8a6" stroke="#c48e25" strokeWidth=".8" /><path d="M1 3l7 6 7-6M1 13l5-6M15 13l-5-6" fill="none" stroke="#c48e25" strokeWidth=".8" /></svg>
          <svg width="16" height="16" viewBox="0 0 16 16"><path d="M1 14V4q0-3 3-3h9v13z" fill="#fff3d6" stroke="#e8951c" strokeWidth="1.300" /><circle cx="10" cy="10" r="5" fill="#f6ca62" stroke="#cf8719" /><path d="M7.500 9l2.500 2 2.500-2" fill="none" stroke="#80561a" /></svg>
          <svg width="16" height="16" viewBox="0 0 16 16"><path d="M6.500 2.500h5v5h-5zM9.500 5.500h5v5h-5zM2.500 6.500h7v7h-7z" fill="#222" stroke="#fff" strokeWidth="1.400" /></svg>
          <svg width="16" height="16" viewBox="0 0 16 16"><rect width="16" height="16" rx="1" fill="#1588cf" /><path d="M3.500 10A5 5 0 0 1 11 4M12.500 6A5 5 0 0 1 5 12" fill="none" stroke="#fff" strokeWidth="1.800" /></svg>
          <svg width="16" height="16" viewBox="0 0 16 16"><path d="M1 1h13v14H1z" fill="#f6f6f6" stroke="#999" /><path d="M3 8l4 4 8-10" fill="none" stroke="#4fae3a" strokeWidth="3" /></svg>
          <svg width="16" height="16" viewBox="0 0 16 16"><rect width="16" height="16" fill="#1155c4" /><path d="M8 1.500v13M2.500 4.700l11 6.600M13.500 4.700l-11 6.600M6 2.500l2 2 2-2M6 13.500l2-2 2 2M2 8h3M11 8h3" fill="none" stroke="#dff1ff" strokeWidth="1.300" /></svg>
          <svg width="16" height="16" viewBox="0 0 16 16"><path d="M1.500 1v14" stroke="#fff" strokeWidth="2" /><path d="M3 2h5l1 1h5v6H8L7 8H3z" fill="#fff" /><path d="M11 6l5 9.500H6z" fill="#f8ce2a" stroke="#8d6c0a" strokeWidth=".6" /><path d="M11 9v3M11 13v1.300" stroke="#222" strokeWidth="1.200" /></svg>
        </div>
        <svg width="9" height="16" viewBox="0 0 9 16" className="ml-[14px]"><path d="M1 2.500h7v12H1zM3 2V.8h3V2" fill="#111" stroke="#fff" strokeWidth="1.400" /><path d="M3 8h3v4.500H3z" fill="#fff" /></svg>
        <svg width="16" height="16" viewBox="0 0 16 16" className="ml-[9px]"><path d="M4.500 3.500h10v7h-10zM7 13.500h6M10 11v2M2.500 5v8.500H6M1 1h4v3.500H1z" fill="none" stroke="#fff" strokeWidth="1.200" /></svg>
        <svg width="17" height="16" viewBox="0 0 17 16" className="ml-[7px]"><path d="M1 5h3l6-4v14l-6-4H1z" fill="#fff" /><circle cx="12" cy="11" r="4" fill="#fff" stroke="#d92322" strokeWidth="2" /><path d="M9.500 8.500l5 5" stroke="#d92322" strokeWidth="2" /></svg>
        <span className="ml-[15px] w-[22px] text-[11.500px] tracking-[-0.5px]">ESP</span>
        <div className="ml-[14px] flex w-[64px] flex-col items-center text-[12px] leading-[17px] tracking-[-0.4px] whitespace-nowrap">
          <span>09:21 a. m.</span><span>06/02/2014</span>
        </div>
        <div className="w-[23px]" />
      </div>
    </div>
  );
}

export default function App() {
  return (
    <div className={"relative flex h-[768px] w-[1366px] flex-col overflow-hidden bg-white " + ui}>
      <WordTop />
      <WordRibbon />
      <WordDocument />
      <WordStatus />
      <Taskbar />
      <BrowserWindow />
    </div>
  );
}
